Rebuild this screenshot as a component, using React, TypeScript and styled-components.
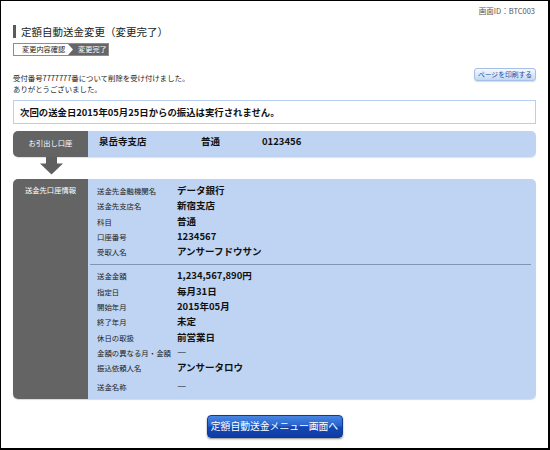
import styled, { createGlobalStyle } from 'styled-components';

const GlobalStyle = createGlobalStyle`
  html, body {
    margin: 0;
    padding: 0;
    background: #ffffff;
  }

  body {
    font-family: "Noto Sans CJK JP", "Noto Sans", sans-serif;
    color: #222222;
  }
`;

interface IDetail {
  label: string;
  value: string;
}

const payeeRows: IDetail[] = [
  { label: '送金先金融機関名', value: 'データ銀行' },
  { label: '送金先支店名', value: '新宿支店' },
  { label: '科目', value: '普通' },
  { label: '口座番号', value: '1234567' },
  { label: '受取人名', value: 'アンサーフドウサン' },
];

const scheduleRows: IDetail[] = [
  { label: '送金金額', value: '1,234,567,890円' },
  { label: '指定日', value: '毎月31日' },
  { label: '開始年月', value: '2015年05月' },
  { label: '終了年月', value: '未定' },
  { label: '休日の取扱', value: '前営業日' },
  { label: '金額の異なる月・金額', value: '―' },
  { label: '振込依頼人名', value: 'アンサータロウ' },
];

const App = () => {
  return (
    <>
      <GlobalStyle />
      <Frame>
        <ScreenId>画面ID：BTC003</ScreenId>
        <Title>定額自動送金変更（変更完了）</Title>

        <StepBar>
          <Step>変更内容確認</Step>
          <Step $active>変更完了</Step>
        </StepBar>

        <MessageRow>
          <Message>
            受付番号7777777番について削除を受け付けました。
            <br />
            ありがとうございました。
          </Message>
          <PrintButton type="button">ページを印刷する</PrintButton>
        </MessageRow>

        <Notice>次回の送金日2015年05月25日からの振込は実行されません。</Notice>

        <AccountRow>
          <SideLabel $center>お引出し口座</SideLabel>
          <AccountValues>
            <span>泉岳寺支店</span>
            <span>普通</span>
            <span>0123456</span>
          </AccountValues>
        </AccountRow>

        <ArrowWrap>
          <svg width="23" height="22" viewBox="0 0 23 22">
            <rect x="6" y="0" width="11" height="7" fill="#5f5f5f" />
            <polygon points="0,6.5 23,6.5 11.5,17.5" fill="#5f5f5f" />
          </svg>
        </ArrowWrap>

        <Panel>
          <SideLabel>送金先口座情報</SideLabel>
          <PanelBody>
            {payeeRows.map((row) => (
              <DetailRow key={row.label}>
                <DetailLabel>{row.label}</DetailLabel>
                <DetailValue>{row.value}</DetailValue>
              </DetailRow>
            ))}
            <Divider />
            {scheduleRows.map((row) => (
              <DetailRow key={row.label}>
                <DetailLabel>{row.label}</DetailLabel>
                <DetailValue>{row.value}</DetailValue>
              </DetailRow>
            ))}
            <DetailRow $spaced>
              <DetailLabel>送金名称</DetailLabel>
              <DetailValue>―</DetailValue>
            </DetailRow>
          </PanelBody>
        </Panel>

        <Footer>
          <MenuButton type="button">定額自動送金メニュー画面へ</MenuButton>
        </Footer>
      </Frame>
    </>
  );
};

export default App;

const Frame = styled.div`
  width: 550px;
  height: 450px;
  box-sizing: border-box;
  border-style: solid;
  border-color: #000000;
  border-width: 1px 2px 2px 1px;
  padding: 5px 12px 0 12px;
  display: flex;
  flex-direction: column;
`;

const ScreenId = styled.div`
  text-align: right;
  font-size: 7.5px;
  line-height: 10px;
  color: #555555;
  padding-right: 1px;
`;

const Title = styled.h1`
  margin: 9px 0 0 0;
  border-left: 3px solid #5a5a5a;
  padding-left: 5px;
  font-size: 10.5px;
  line-height: 13px;
  font-weight: normal;
  color: #222222;
`;

const StepBar = styled.div`
  margin-top: 5px;
  display: flex;
  width: 96px;
  height: 13px;
  box-sizing: border-box;
  border: 1px solid #8c8c8c;
  background: #666666;
`;

const Step = styled.div<{ $active?: boolean }>`
  display: flex;
  align-items: center;
  font-size: 7.2px;
  line-height: 11px;
  white-space: nowrap;
  color: ${({ $active }) => ($active ? '#ffffff' : '#222222')};
  background: ${({ $active }) => ($active ? 'transparent' : '#ffffff')};
  width: ${({ $active }) => ($active ? 'auto' : '59px')};
  padding-left: ${({ $active }) => ($active ? '5px' : '8px')};
  box-sizing: border-box;
  clip-path: ${({ $active }) =>
    $active ? 'none' : 'polygon(0 0, calc(100% - 5px) 0, 100% 50%, calc(100% - 5px) 100%, 0 100%)'};
`;

const MessageRow = styled.div`
  margin-top: 12px;
  display: flex;
  justify-content: space-between;
  align-items: flex-start;
`;

const Message = styled.p`
  margin: 5px 0 0 0;
  font-size: 7.4px;
  line-height: 10.5px;
  color: #222222;
`;

const PrintButton = styled.button`
  width: 62px;
  height: 13px;
  padding: 0;
  border: 1px solid #a6bfe6;
  border-radius: 3px;
  background: linear-gradient(#f6f9fe 0%, #dde9f9 50%, #c4d7f2 100%);
  box-shadow: 0 1px 1px rgba(0, 0, 0, 0.15);
  font-family: "Noto Sans CJK JP", sans-serif;
  font-size: 6.8px;
  line-height: 11px;
  color: #1d4ea6;
  white-space: nowrap;
  cursor: pointer;
`;

const Notice = styled.div`
  margin-top: 6px;
  height: 24px;
  box-sizing: border-box;
  border: 1px solid #b7cff1;
  padding-left: 6px;
  display: flex;
  align-items: center;
  font-size: 9.4px;
  font-weight: bold;
  color: #111111;
`;

const AccountRow = styled.div`
  margin-top: 7px;
  height: 26px;
  display: flex;
  border-radius: 5px;
  overflow: hidden;
  box-shadow: 0 1px 1px rgba(0, 0, 0, 0.12);
`;

const SideLabel = styled.div<{ $center?: boolean }>`
  width: 75px;
  flex-shrink: 0;
  background: #646464;
  color: #ffffff;
  font-size: 7.3px;
  line-height: 15.3px;
  text-align: center;
  display: flex;
  justify-content: center;
  align-items: ${({ $center }) => ($center ? 'center' : 'flex-start')};
  padding-top: ${({ $center }) => ($center ? '0' : '4px')};
  box-sizing: border-box;
`;

const AccountValues = styled.div`
  flex: 1;
  background: #bed4f2;
  display: grid;
  grid-template-columns: 102px 61px auto;
  align-content: start;
  padding: 3px 0 0 11px;
  font-size: 9.5px;
  line-height: 15px;
  font-weight: bold;
  color: #111111;
`;

const ArrowWrap = styled.div`
  height: 22px;
  padding-left: 27px;

  svg {
    display: block;
  }
`;

const Panel = styled.div`
  display: flex;
  border-radius: 5px;
  overflow: hidden;
  box-shadow: 0 1px 1px rgba(0, 0, 0, 0.15);
`;

const PanelBody = styled.div`
  flex: 1;
  background: #bed4f2;
  padding: 4px 5px 5px 2px;
`;

const DetailRow = styled.div<{ $spaced?: boolean }>`
  display: grid;
  grid-template-columns: 80px 1fr;
  height: 15.3px;
  align-items: center;
  padding-left: 7px;
  margin-top: ${({ $spaced }) => ($spaced ? '3.6px' : '0')};
`;

const DetailLabel = styled.span`
  font-size: 7.4px;
  line-height: 15.3px;
  color: #222222;
  white-space: nowrap;
`;

const DetailValue = styled.span`
  font-size: 9.5px;
  line-height: 15.3px;
  font-weight: bold;
  color: #111111;
`;

const Divider = styled.div`
  margin: 5px 0 3px 0;
  border-top: 1px solid #8195b2;
`;

const Footer = styled.div`
  margin-top: 16px;
  display: flex;
  justify-content: center;
`;

const MenuButton = styled.button`
  width: 136px;
  height: 23px;
  padding: 0;
  border: 1px solid #0d3a9c;
  border-radius: 4px;
  background: linear-gradient(#4a86e2 0%, #2460cc 48%, #1447b4 52%, #0f3ca2 100%);
  box-shadow: 0 1px 2px rgba(0, 0, 0, 0.45);
  font-family: "Noto Sans CJK JP", sans-serif;
  font-size: 9.8px;
  line-height: 21px;
  color: #ffffff;
  white-space: nowrap;
  cursor: pointer;
`;
